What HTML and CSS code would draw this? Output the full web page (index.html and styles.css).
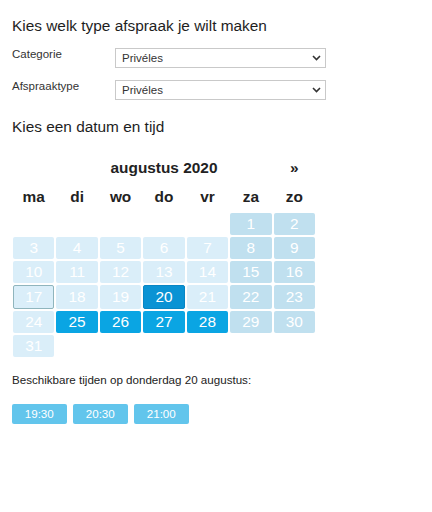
FILE: index.html
```html
<!DOCTYPE html>
<html lang="nl">
<head>
<meta charset="utf-8">
<title>Afspraak maken</title>
<link rel="stylesheet" href="styles.css">
</head>
<body>
<h1 class="title">Kies welk type afspraak je wilt maken</h1>
<div class="form">
  <label class="label">Categorie</label>
  <div class="select-wrap">
    <select class="select"><option>Privéles</option></select>
    <svg class="chev" width="9" height="6" viewBox="0 0 9 6"><path d="M1 1 L4.5 4.5 L8 1" fill="none" stroke="#333" stroke-width="1.6"/></svg>
  </div>
  <label class="label">Afspraaktype</label>
  <div class="select-wrap">
    <select class="select"><option>Privéles</option></select>
    <svg class="chev" width="9" height="6" viewBox="0 0 9 6"><path d="M1 1 L4.5 4.5 L8 1" fill="none" stroke="#333" stroke-width="1.6"/></svg>
  </div>
</div>
<h2 class="title title-2">Kies een datum en tijd</h2>
<div class="cal">
  <div class="cal-row cal-head">
    <span class="month">augustus 2020</span>
    <span class="next">»</span>
  </div>
  <div class="cal-row cal-week">
    <span>ma</span><span>di</span><span>wo</span><span>do</span><span>vr</span><span>za</span><span>zo</span>
  </div>
  <div class="cal-row cal-grid">
    <span class="blank"></span><span class="blank"></span><span class="blank"></span><span class="blank"></span><span class="blank"></span>
    <span class="day we">1</span><span class="day we">2</span>
    <span class="day">3</span><span class="day">4</span><span class="day">5</span><span class="day">6</span><span class="day">7</span><span class="day we">8</span><span class="day we">9</span>
    <span class="day">10</span><span class="day">11</span><span class="day">12</span><span class="day">13</span><span class="day">14</span><span class="day we">15</span><span class="day we">16</span>
    <span class="day today">17</span><span class="day">18</span><span class="day">19</span><span class="day sel">20</span><span class="day">21</span><span class="day we">22</span><span class="day we">23</span>
    <span class="day">24</span><span class="day avail">25</span><span class="day avail">26</span><span class="day avail">27</span><span class="day avail">28</span><span class="day we">29</span><span class="day we">30</span>
    <span class="day">31</span>
  </div>
</div>
<p class="avail-text">Beschikbare tijden op donderdag 20 augustus:</p>
<div class="times">
  <button class="time">19:30</button>
  <button class="time">20:30</button>
  <button class="time">21:00</button>
</div>
</body>
</html>
```

FILE: styles.css
```css
html, body {
  margin: 0;
  padding: 0;
  background: #ffffff;
}
body {
  padding: 0 12px;
  font-family: "Liberation Sans", Arial, sans-serif;
  color: #222;
}
.title {
  margin: 17px 0 0;
  font-size: 15.4px;
  font-weight: normal;
  line-height: 18px;
  color: #1e1e1e;
}
.title-2 {
  margin-top: 18px;
}
.form {
  margin-top: 13px;
  display: grid;
  grid-template-columns: 103px 211px;
  row-gap: 12px;
}
.label {
  font-size: 11.5px;
  line-height: 13px;
  color: #333;
  align-self: start;
}
.select-wrap {
  position: relative;
  height: 20px;
}
.select {
  appearance: none;
  -webkit-appearance: none;
  display: block;
  width: 211px;
  height: 20px;
  margin: 0;
  padding: 0 0 0 6px;
  border: 1px solid #c9c9c9;
  border-radius: 0;
  background: #fff;
  font-family: "Liberation Sans", Arial, sans-serif;
  font-size: 11.5px;
  color: #333;
  outline: none;
}
.chev {
  position: absolute;
  right: 5px;
  top: 7px;
}
.cal {
  width: 302px;
  margin-left: 1px;
}
.cal-row {
  display: grid;
  grid-template-columns: repeat(7, 1fr);
  column-gap: 2px;
}
.cal-head {
  margin-top: 23px;
  font-size: 15.4px;
  font-weight: bold;
  line-height: 18px;
  color: #222;
}
.month {
  grid-column: 2 / 7;
  text-align: center;
}
.next {
  grid-column: 7;
  text-align: center;
}
.cal-week {
  margin-top: 11px;
  font-size: 15.4px;
  font-weight: bold;
  line-height: 18px;
  text-align: center;
  color: #222;
}
.cal-grid {
  margin-top: 7px;
  row-gap: 2px;
}
.day {
  display: flex;
  align-items: center;
  justify-content: center;
  min-height: 22px;
  border-radius: 2px;
  background: #daeef9;
  color: #fff;
  font-size: 15.4px;
  line-height: 18px;
}
.day.we {
  background: #c0e0ef;
}
.day.today {
  border: 1px solid #8fb5bd;
}
.day.sel {
  background: #0a93d4;
  border: 1px solid #0986c4;
}
.day.avail {
  background: #0aa5e3;
}
.avail-text {
  margin: 16px 0 0;
  font-size: 11.6px;
  line-height: 14px;
  color: #222;
}
.times {
  margin-top: 17px;
  display: flex;
  gap: 6.5px;
}
.time {
  width: 54.5px;
  height: 20px;
  padding: 0;
  border: none;
  border-radius: 2px;
  background: #62c5ec;
  color: #fff;
  font-family: "Liberation Sans", Arial, sans-serif;
  font-size: 11.6px;
  line-height: 20px;
}
```
